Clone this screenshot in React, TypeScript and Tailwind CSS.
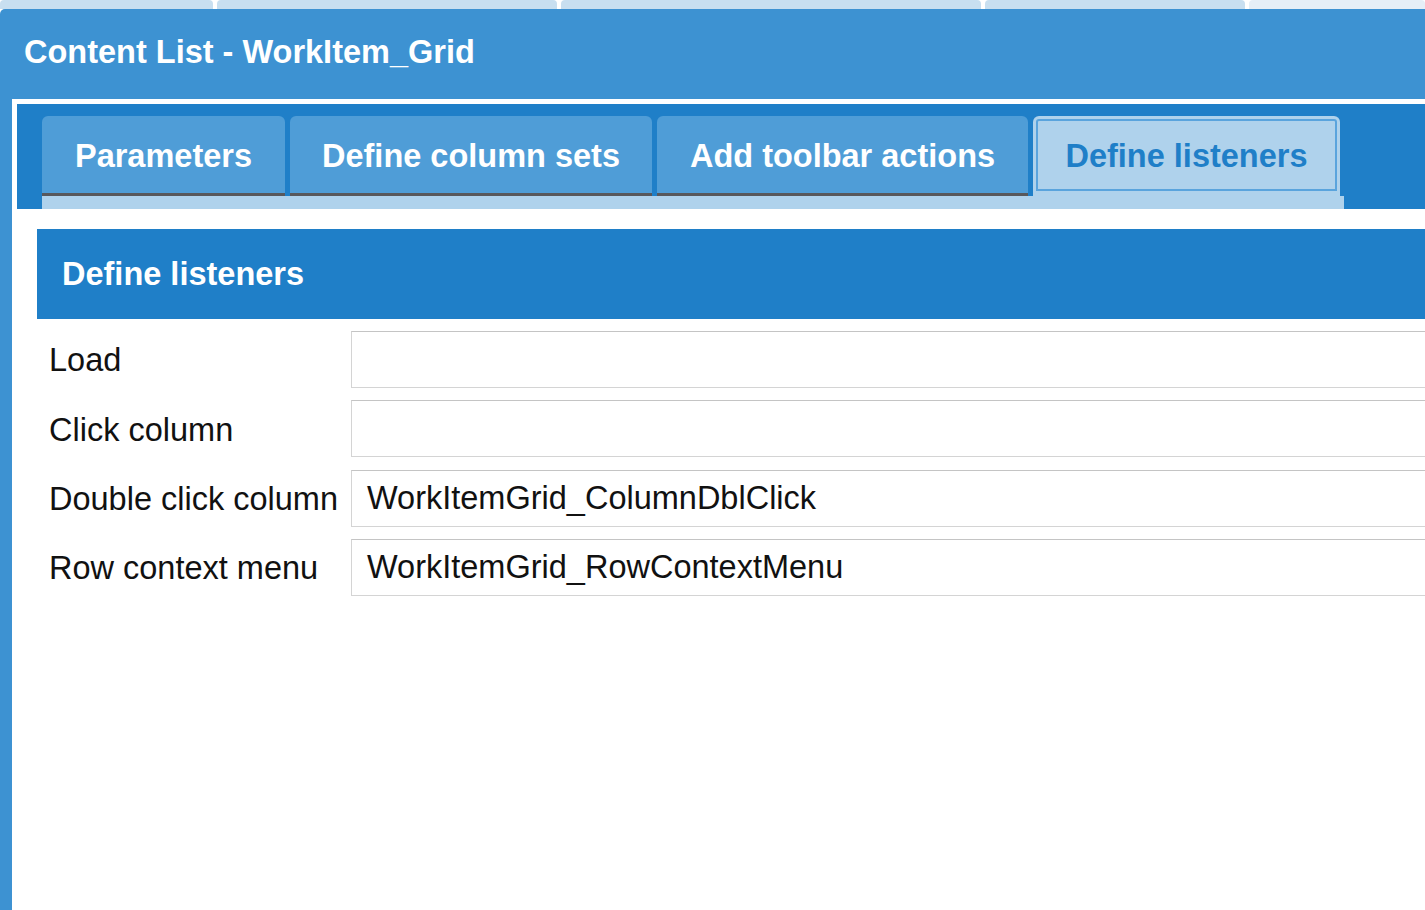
import React from 'react'

// ── Data ──────────────────────────────────────────────────────────────────────

const TABS = [
  { label: 'Parameters', w: 'w-[243px]' },
  { label: 'Define column sets', w: 'w-[362px]' },
  { label: 'Add toolbar actions', w: 'w-[371px]' },
]

const LISTENERS = [
  { label: 'Load', value: '' },
  { label: 'Click column', value: '' },
  { label: 'Double click column', value: 'WorkItemGrid_ColumnDblClick' },
  { label: 'Row context menu', value: 'WorkItemGrid_RowContextMenu' },
]

const FONT = { fontFamily: '"Liberation Sans", Arial, sans-serif' }

// ── Background tab strip (windows behind) ─────────────────────────────────────

function BackStrip() {
  return (
    <div className="flex h-[9px] gap-[4px] bg-white">
      <div className="w-[213px] shrink-0 rounded-t-[4px] bg-[#c8dff0]" />
      <div className="w-[340px] shrink-0 rounded-t-[4px] bg-[#c8dff0]" />
      <div className="w-[420px] shrink-0 rounded-t-[4px] bg-[#c8dff0]" />
      <div className="w-[260px] shrink-0 rounded-t-[4px] bg-[#c8dff0]" />
      <div className="flex-1 rounded-t-[4px] bg-[#e5eff7]" />
    </div>
  )
}

// ── Tab bar ───────────────────────────────────────────────────────────────────

function TabBar() {
  return (
    <div className="bg-[#1f7fc8] pl-[25px] pt-[12px]">
      <div className="flex gap-[5px]">
        {TABS.map(t => (
          <div
            key={t.label}
            className={`${t.w} shrink-0 h-[80px] rounded-t-[6px] bg-[#4f9dd7] border-b-[3px] border-[#58585c] flex items-center justify-center pt-[3px] text-white font-bold text-[32.5px] leading-none`}
          >
            {t.label}
          </div>
        ))}
        <div className="w-[307px] shrink-0 h-[93px] rounded-t-[6px] bg-[#afd2ec] pt-[3px] px-[3px]">
          <div className="h-[72px] rounded-t-[3px] border-2 border-[#5aa4dd] flex items-center justify-center pt-[2px] text-[#1f7fc8] font-bold text-[32.5px] leading-none">
            Define listeners
          </div>
        </div>
      </div>
      <div className="w-[1302px] h-[13px] bg-[#afd2ec] -mt-[13px]" />
    </div>
  )
}

// ── Listener form ─────────────────────────────────────────────────────────────

function ListenerForm() {
  return (
    <div className="px-[20px] pt-[20px]">
      <div className="h-[90px] bg-[#1f7fc8] flex items-center pl-[25px] text-white font-bold text-[32.5px] leading-none">
        Define listeners
      </div>
      <div className="mt-[12px] flex flex-col gap-[12.4px]">
        {LISTENERS.map(l => (
          <div key={l.label} className="flex items-center">
            <div className="w-[314px] shrink-0 pl-[12px] pt-[2px] text-[32.5px] leading-none text-[#111] whitespace-nowrap">
              {l.label}
            </div>
            <div className="flex-1 h-[57px] border border-[#d4d4d4] border-t-[#c4c4c4] bg-white flex items-center pl-[15px] text-[32.5px] leading-none text-[#111] whitespace-nowrap">
              {l.value}
            </div>
          </div>
        ))}
      </div>
    </div>
  )
}

// ── App ───────────────────────────────────────────────────────────────────────

export default function App() {
  return (
    <div className="w-[1425px] h-[910px] overflow-hidden bg-white" style={FONT}>
      <BackStrip />
      <div className="w-[1480px] h-[901px] rounded-tl-[5px] bg-[#3d92d2] flex flex-col">
        <div className="h-[90px] shrink-0 flex items-center pl-[24px] pb-[3px] text-white font-bold text-[32.5px] leading-none">
          Content List - WorkItem_Grid
        </div>
        <div className="flex-1 ml-[12px] bg-white pt-[5px] pl-[5px]">
          <TabBar />
          <ListenerForm />
        </div>
      </div>
    </div>
  )
}
